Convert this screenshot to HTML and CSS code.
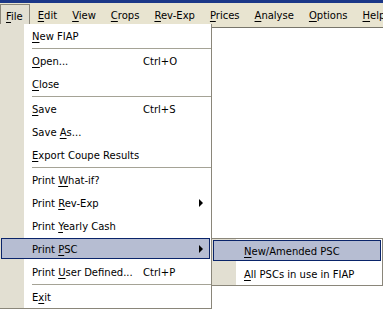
FILE: index.html
```html
<html lang="en">
<head>
    <meta charset="UTF-8">
    <meta name="viewport" content="width=device-width, initial-scale=1.0">
    <title>FIAP - File menu</title>
    <link rel="stylesheet" href="styles.css">
</head>
<body>
    <div class="window">
        <div class="title-edge"></div>

        <div class="menubar">
            <span class="bar-item open"><u>F</u>ile</span>
            <span class="bar-item"><u>E</u>dit</span>
            <span class="bar-item"><u>V</u>iew</span>
            <span class="bar-item"><u>C</u>rops</span>
            <span class="bar-item"><u>R</u>ev-Exp</span>
            <span class="bar-item"><u>P</u>rices</span>
            <span class="bar-item"><u>A</u>nalyse</span>
            <span class="bar-item"><u>O</u>ptions</span>
            <span class="bar-item"><u>H</u>elp</span>
        </div>

        <div class="workspace"></div>

        <!-- File menu -->
        <div class="dropdown">
            <div class="item"><span class="label"><u>N</u>ew FIAP</span></div>
            <div class="separator"></div>
            <div class="item"><span class="label"><u>O</u>pen...</span><span class="shortcut">Ctrl+O</span></div>
            <div class="item"><span class="label"><u>C</u>lose</span></div>
            <div class="separator"></div>
            <div class="item"><span class="label"><u>S</u>ave</span><span class="shortcut">Ctrl+S</span></div>
            <div class="item"><span class="label">Save <u>A</u>s...</span></div>
            <div class="item"><span class="label"><u>E</u>xport Coupe Results</span></div>
            <div class="separator"></div>
            <div class="item"><span class="label">Print <u>W</u>hat-if?</span></div>
            <div class="item"><span class="label">Print <u>R</u>ev-Exp</span><span class="arrow"></span></div>
            <div class="item"><span class="label">Print <u>Y</u>early Cash</span></div>
            <div class="item active"><span class="label">Print <u>P</u>SC</span><span class="arrow"></span></div>
            <div class="item"><span class="label">Print <u>U</u>ser Defined...</span><span class="shortcut">Ctrl+P</span></div>
            <div class="separator"></div>
            <div class="item"><span class="label">E<u>x</u>it</span></div>
        </div>

        <!-- Print PSC submenu -->
        <div class="submenu">
            <div class="item active"><span class="label"><u>N</u>ew/Amended PSC</span></div>
            <div class="item"><span class="label"><u>A</u>ll PSCs in use in FIAP</span></div>
        </div>
    </div>
</body>
</html>
```

FILE: styles.css
```css
body {
    margin: 0;
    font-family: "DejaVu Sans", Tahoma, sans-serif;
    font-size: 10px;
    color: #000;
    background-color: #fff;
    overflow: hidden;
}
u {
    text-decoration-thickness: 1px;
    text-underline-offset: 2px;
}
.window {
    position: relative;
    width: 383px;
    height: 311px;
    background: #fff;
}
.title-edge {
    height: 3px;
    background-color: #1b3787;
}
.menubar {
    display: flex;
    height: 24px;
    overflow: hidden;
    background-color: #e8e4d0;
    border-bottom: 1px solid #77756a;
}
.bar-item {
    margin-top: 1px;
    padding: 0 7.5px;
    line-height: 23px;
    white-space: nowrap;
}
.bar-item.open {
    padding: 0 6.5px 0 5px;
    border: 1px solid #8a867a;
    border-bottom: none;
    background-color: #e2dfd2;
}
.workspace {
    height: 283px;
    background: #fff;
}
.dropdown,
.submenu {
    position: absolute;
    display: flex;
    flex-direction: column;
    box-sizing: border-box;
    white-space: nowrap;
}
.dropdown {
    left: 0;
    top: 24px;
    width: 212px;
    border-right: 1px solid #8a867a;
    border-bottom: 1px solid #8a867a;
    background: linear-gradient(to right, #e2dfd2 24px, #fff 24px);
}
.submenu {
    left: 211px;
    top: 238px;
    width: 172px;
    border: 1px solid #8a867a;
    background: linear-gradient(to right, #e2dfd2 24px, #fff 24px);
}
.item {
    display: flex;
    align-items: center;
    height: 21px;
    margin: 1px;
    padding-top: 1px;
    box-sizing: border-box;
}
.item.active {
    background-color: #b6bdd2;
    box-shadow: inset 0 0 0 1px #0a246a;
}
.label {
    width: 111px;
    padding-left: 31px;
}
.arrow {
    width: 0;
    height: 0;
    margin-left: auto;
    margin-right: 7px;
    border-left: 4px solid #000;
    border-top: 4px solid transparent;
    border-bottom: 4px solid transparent;
}
.separator {
    height: 1px;
    margin-left: 32px;
    border-bottom: 1px solid #a5a396;
}
```
